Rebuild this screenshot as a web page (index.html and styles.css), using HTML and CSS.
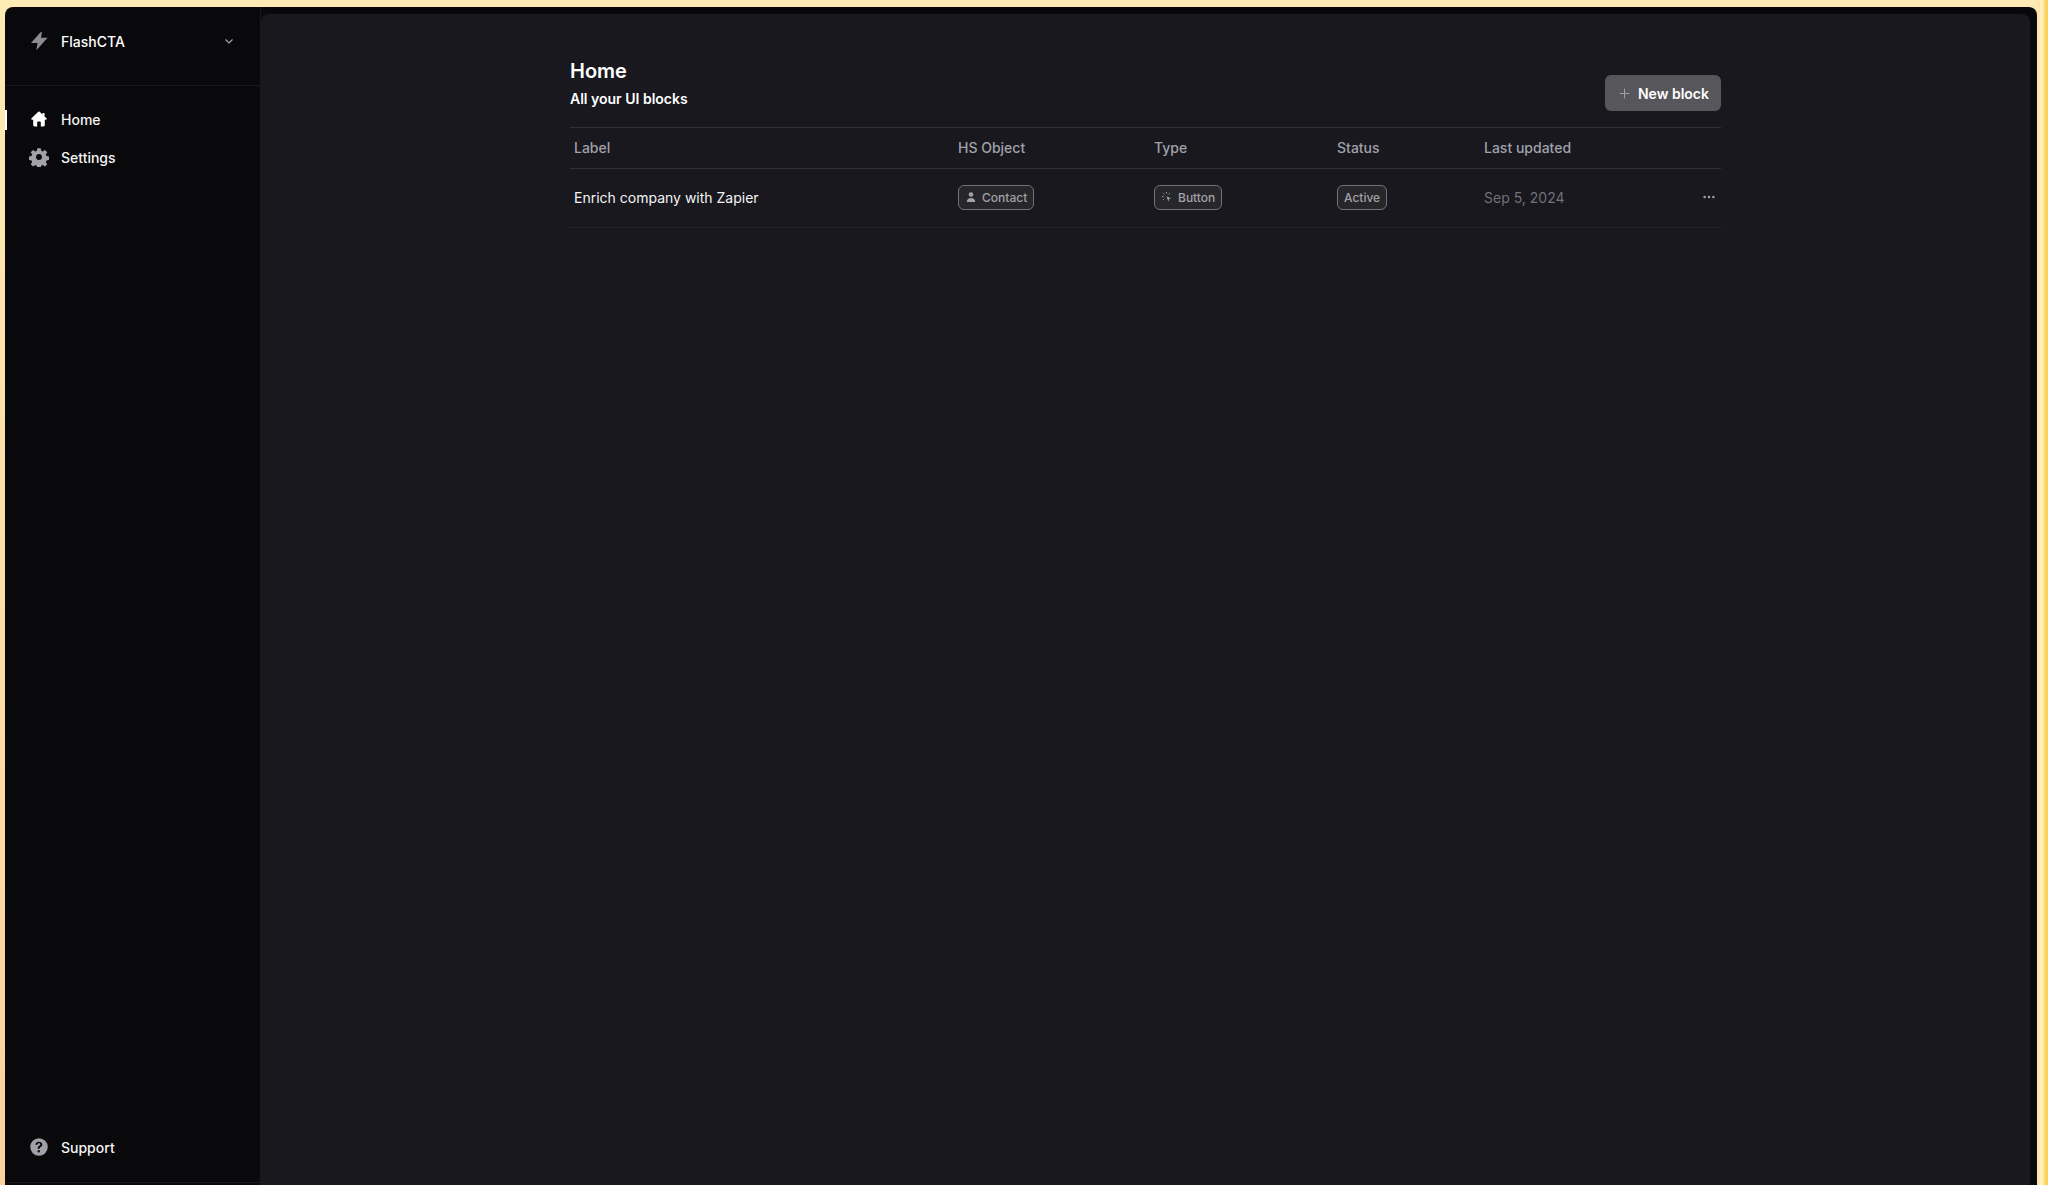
FILE: index.html
```html
<!DOCTYPE html>
<html lang="en">
<head>
  <meta charset="UTF-8" />
  <title>FlashCTA</title>
  <link rel="stylesheet" href="styles.css">
</head>
<body>
  <div class="frame">
    <div class="sidebar">
      <div class="brand">
        <svg class="icon brand-icon" viewBox="0 0 20 20"><path d="M11.500 1.200 2 12h6.500L7.400 19.200 18.600 6.800H12l1-5.600z"/></svg>
        <span class="brand-name">FlashCTA</span>
        <svg class="chevron" viewBox="0 0 16 16"><path d="M4.500 6.500 8 10l3.500-3.500"/></svg>
      </div>
      <nav class="nav">
        <a class="nav-item active">
          <svg class="icon" viewBox="0 0 20 20"><path d="M10 2.500c-.3 0-.5.100-.7.300L2.500 9.300c-.5.500-.2 1.400.6 1.400h1.100v5.400c0 .8.600 1.400 1.400 1.400h2.600v-4.300c0-.5.300-.8.800-.8h2c.5 0 .8.300.8.800v4.300h2.600c.800 0 1.400-.6 1.400-1.400v-5.400h1.100c.8 0 1.100-.9.600-1.400l-2-1.900V4h-2v1.500l-2.800-2.700a1 1 0 0 0-.7-.3z"/></svg>
          Home
        </a>
        <a class="nav-item">
          <svg class="icon" viewBox="0 0 24 24"><path fill-rule="evenodd" d="M10 1.500h4l.6 3 1.900.8 2.600-1.700 2.800 2.800-1.700 2.600.8 1.900 3 .6v4l-3 .6-.8 1.900 1.700 2.600-2.800 2.800-2.600-1.700-1.900.8-.6 3h-4l-.6-3-1.900-.8-2.600 1.700-2.800-2.800 1.700-2.600-.8-1.900-3-.6v-4l3-.6.8-1.900-1.700-2.600 2.800-2.800 2.600 1.700 1.900-.8zM12 8.500a3.500 3.500 0 1 0 0 7 3.500 3.500 0 0 0 0-7z"/></svg>
          Settings
        </a>
      </nav>
      <div class="sidebar-foot">
        <a class="nav-item">
          <svg class="icon" viewBox="0 0 24 24"><path fill-rule="evenodd" d="M12 1.500a10.500 10.500 0 1 0 0 21 10.500 10.500 0 0 0 0-21zm-.1 4.200c2.400 0 4.100 1.300 4.100 3.400 0 1.400-.7 2.300-1.900 3-1 .6-1.300 1-1.300 1.700v.4h-2.300v-.6c-.1-1.400.4-2.200 1.600-3 1-.6 1.400-1 1.400-1.700s-.6-1.300-1.600-1.300-1.700.6-1.800 1.600H7.700c.1-2.200 1.700-3.500 4.200-3.500zM11.700 15.500a1.500 1.500 0 1 1 0 3 1.500 1.500 0 0 1 0-3z"/></svg>
          Support
        </a>
      </div>
    </div>

    <main class="main">
      <div class="content">
        <div class="page-head">
          <div>
            <h1>Home</h1>
            <p class="subtitle">All your UI blocks</p>
          </div>
          <button class="new-btn">
            <svg viewBox="0 0 16 16"><path d="M8 2v12M2 8h12"/></svg>
            New block
          </button>
        </div>
        <div class="table">
          <div class="row head">
            <div>Label</div>
            <div>HS Object</div>
            <div>Type</div>
            <div>Status</div>
            <div>Last updated</div>
          </div>
          <div class="row body">
            <div class="label">Enrich company with Zapier</div>
            <div>
              <span class="tag">
                <svg viewBox="0 0 12 12"><circle cx="6" cy="3.500" r="2.300"/><path d="M1.800 11c0-2.600 1.800-4 4.200-4s4.200 1.400 4.200 4z"/></svg>
                Contact
              </span>
            </div>
            <div>
              <span class="tag">
                <svg viewBox="0 0 12 12"><path d="M5.500 5.200 10 7.200 8 8l-.6 2.800z"/><path class="rays" d="M5.500 1v1.500M2.300 2.300l1 1M1 5.500h1.500M2.300 8.700l1-1M8.700 2.300l-1 1"/></svg>
                Button
              </span>
            </div>
            <div><span class="tag">Active</span></div>
            <div class="date">Sep 5, 2024</div>
            <div class="more">
              <svg viewBox="0 0 16 16"><circle cx="3" cy="8" r="1.400"/><circle cx="8" cy="8" r="1.400"/><circle cx="13" cy="8" r="1.400"/></svg>
            </div>
          </div>
        </div>
      </div>
    </main>
  </div>
</body>
</html>
```

FILE: styles.css
```css
html, body {
  height: 100%;
}
body {
  margin: 0;
  height: 1185px;
  overflow: hidden;
  box-sizing: border-box;
  padding: 7px 11px 0 5px;
  font-family: Inter, "Liberation Sans", sans-serif;
  font-size: 14px;
  color: #fff;
  background:
    linear-gradient(90deg, #fde6a8 0 3px, #ffefc4 3px 6px, #fde08a 6px 8px, #fdd25a 8px) right top / 11px 100% no-repeat,
    linear-gradient(180deg, #fdeab4 0%, #fdd0a0 100%);
}
.frame {
  display: flex;
  height: 100%;
  background: #09090b;
  border-radius: 8px 8px 0 0;
  overflow: hidden;
  padding-right: 7px;
}
.sidebar {
  width: 255px;
  flex-shrink: 0;
  display: flex;
  flex-direction: column;
  border-right: 1px solid #18181b;
}
.brand {
  display: flex;
  align-items: center;
  height: 68px;
  padding: 0 23px 10px 24px;
  border-bottom: 1px solid #18181b;
  font-weight: 500;
}
.brand-name {
  flex: 1;
}
.icon {
  width: 20px;
  height: 20px;
  margin-right: 12px;
  fill: #a1a1aa;
  flex-shrink: 0;
}
.brand-icon {
  fill: #8b8b92;
}
.chevron {
  width: 16px;
  height: 16px;
  fill: none;
  stroke: #a1a1aa;
  stroke-width: 1.200;
}
.nav {
  padding-top: 14px;
}
.nav-item {
  display: flex;
  align-items: center;
  height: 38px;
  padding-left: 24px;
  font-weight: 500;
  position: relative;
  color: #f4f4f5;
}
.nav-item.active .icon {
  fill: #fff;
}
.nav-item.active::before {
  content: "";
  position: absolute;
  left: 0;
  top: 10px;
  width: 2px;
  height: 20px;
  background: #fff;
}
.sidebar-foot {
  margin-top: auto;
  margin-bottom: 2px;
  padding-bottom: 16px;
  border-bottom: 1px solid #18181b;
}
.main {
  flex: 1;
  background: #18181e;
  margin-top: 7px;
  border-radius: 8px 8px 0 0;
}
.content {
  width: 1151px;
  margin-left: 309px;
  padding-top: 45px;
}
.page-head {
  display: flex;
  justify-content: space-between;
  align-items: flex-end;
  padding-bottom: 17px;
}
h1 {
  margin: 0;
  font-size: 20px;
  line-height: 24px;
  font-weight: 600;
}
.subtitle {
  margin: 6px 0 1px;
  font-size: 14px;
  line-height: 20px;
  font-weight: 600;
}
.new-btn {
  display: flex;
  align-items: center;
  gap: 7px;
  height: 36px;
  margin-bottom: -1px;
  padding: 0 12px 0 13px;
  border: 0;
  border-radius: 6px;
  background: #56565b;
  color: #fff;
  font: 600 14px Inter, "Liberation Sans", sans-serif;
}
.new-btn svg {
  width: 13px;
  height: 13px;
  fill: none;
  stroke: #a1a1aa;
  stroke-width: 1.200;
}
.row {
  display: grid;
  grid-template-columns: 384px 196px 183px 147px 1fr 24px;
  align-items: center;
  padding-left: 4px;
}
.head {
  height: 39px;
  padding-bottom: 1px;
  border-top: 1px solid #2f2f35;
  border-bottom: 1px solid #2f2f35;
  color: #a1a1aa;
  font-weight: 500;
}
.body {
  height: 56px;
  padding-bottom: 2px;
  border-bottom: 1px solid #232328;
}
.label {
  color: #f4f4f5;
  font-weight: 400;
}
.tag {
  display: inline-flex;
  align-items: center;
  gap: 5px;
  height: 25px;
  box-sizing: border-box;
  padding: 0 6px;
  border: 1px solid #71717a;
  border-radius: 6px;
  background: #27272a;
  color: #a1a1aa;
  font-size: 12px;
  font-weight: 500;
}
.tag svg {
  width: 12px;
  height: 12px;
  fill: #a1a1aa;
}
.tag .rays {
  fill: none;
  stroke: #a1a1aa;
  stroke-width: 1;
}
.date {
  color: #71717a;
}
.more {
  display: flex;
  justify-content: center;
}
.more svg {
  width: 14px;
  height: 14px;
  fill: #a1a1aa;
}
```
